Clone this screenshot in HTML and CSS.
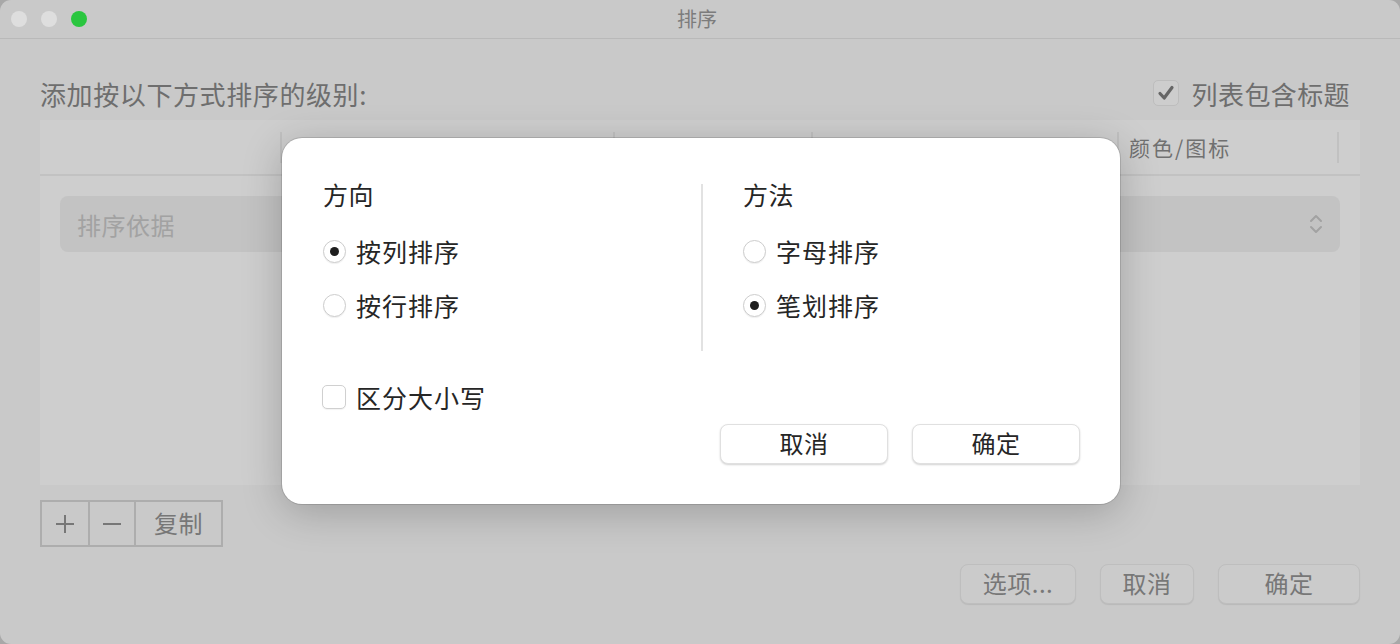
FILE: index.html
```html
<!DOCTYPE html>
<html lang="zh-CN">
<head>
    <meta charset="UTF-8">
    <meta name="viewport" content="width=device-width, initial-scale=1.0">
    <title>排序</title>
    <link rel="stylesheet" href="styles.css">
</head>
<body>

    <div class="window">
        <!-- title bar -->
        <div class="titlebar">
            <div class="lights">
                <span class="light"></span>
                <span class="light"></span>
                <span class="light green"></span>
            </div>
            <div class="title">排序</div>
        </div>

        <div class="content">
            <div class="top-row">
                <div class="heading">添加按以下方式排序的级别:</div>
                <label class="header-check">
                    <span class="check-box">
                        <svg width="20" height="20" viewBox="0 0 20 20"><path d="M4 10.5 L8.2 15 L16 4.5" fill="none" stroke="#666" stroke-width="3.2" stroke-linecap="round" stroke-linejoin="round"/></svg>
                    </span>
                    列表包含标题
                </label>
            </div>

            <div class="table">
                <div class="thead">
                    <div class="th" style="width: 242px"></div>
                    <div class="th" style="width: 333px"></div>
                    <div class="th" style="width: 198px"></div>
                    <div class="th" style="width: 306px"></div>
                    <div class="th th-label" style="width: 220px">颜色/图标</div>
                </div>
                <div class="tbody">
                    <div class="select">
                        <span>排序依据</span>
                        <svg width="16" height="24" viewBox="0 0 16 24"><path d="M3 9 L8 4 L13 9 M3 15 L8 20 L13 15" fill="none" stroke="#a2a2a2" stroke-width="2" stroke-linecap="round" stroke-linejoin="round"/></svg>
                    </div>
                </div>
            </div>

            <div class="segmented">
                <button class="seg seg-icon">
                    <svg width="20" height="20" viewBox="0 0 20 20"><path d="M10 1 V19 M1 10 H19" stroke="#777" stroke-width="2"/></svg>
                </button>
                <button class="seg seg-icon">
                    <svg width="20" height="20" viewBox="0 0 20 20"><path d="M1 10 H19" stroke="#777" stroke-width="2"/></svg>
                </button>
                <button class="seg seg-text">复制</button>
            </div>

            <div class="actions">
                <button class="btn btn-options">选项...</button>
                <button class="btn btn-cancel">取消</button>
                <button class="btn btn-ok">确定</button>
            </div>
        </div>

        <!-- options sheet -->
        <div class="dialog">
            <div class="cols">
                <div class="col">
                    <div class="col-title">方向</div>
                    <label class="opt"><span class="radio checked"></span>按列排序</label>
                    <label class="opt"><span class="radio"></span>按行排序</label>
                </div>
                <div class="col col-right">
                    <div class="col-title">方法</div>
                    <label class="opt"><span class="radio"></span>字母排序</label>
                    <label class="opt"><span class="radio checked"></span>笔划排序</label>
                </div>
            </div>
            <label class="opt case-row"><span class="box"></span>区分大小写</label>
            <div class="dialog-buttons">
                <button class="dbtn">取消</button>
                <button class="dbtn">确定</button>
            </div>
        </div>
    </div>

</body>
</html>
```

FILE: styles.css
```css
body {
    margin: 0;
    background-color: #a8a8a8;
    font-family: "Noto Sans CJK SC", "Noto Sans", sans-serif;
    overflow: hidden;
}

button {
    font-family: inherit;
    margin: 0;
    cursor: pointer;
}

.window {
    position: relative;
    height: 644px;
    background-color: #c9c9c9;
    border-radius: 11px;
    overflow: hidden;
}

.titlebar {
    position: relative;
    height: 38px;
    border-bottom: 1px solid #b9b9b9;
    display: flex;
    align-items: center;
    justify-content: center;
}

.lights {
    position: absolute;
    left: 11px;
    top: 11px;
    display: flex;
    gap: 14px;
}

.light {
    width: 16px;
    height: 16px;
    border-radius: 50%;
    background-color: #dedede;
}

.light.green {
    background-color: #2ac63f;
}

.title {
    font-size: 20px;
    color: #7c7c7c;
    line-height: 36px;
    margin-right: 6px;
}

.content {
    padding: 0 40px;
}

.top-row {
    display: flex;
    justify-content: space-between;
    align-items: center;
    height: 40px;
    margin-top: 34px;
    margin-bottom: 7px;
}

.heading {
    font-size: 26px;
    letter-spacing: 0.6px;
    color: #6e6e6e;
}

.header-check {
    display: flex;
    align-items: center;
    gap: 13px;
    font-size: 26px;
    letter-spacing: 0.4px;
    color: #6e6e6e;
    margin-right: 10px;
}

.check-box {
    width: 26px;
    height: 26px;
    box-sizing: border-box;
    border: 1px solid #bdbdbd;
    border-radius: 5px;
    background-color: #cdcdcd;
    display: flex;
    align-items: center;
    justify-content: center;
}

.table {
    height: 365px;
    background-color: #cecece;
}

.thead {
    height: 54px;
    border-bottom: 2px solid #c2c2c2;
    display: flex;
    align-items: center;
}

.th {
    height: 31px;
    border-right: 2px solid #c1c1c1;
    box-sizing: border-box;
}

.th-label {
    font-size: 21px;
    letter-spacing: 2px;
    color: #707070;
    line-height: 31px;
    padding-left: 10px;
}

.tbody {
    padding: 20px 20px;
}

.select {
    height: 56px;
    border-radius: 8px;
    background-color: #c3c3c3;
    display: flex;
    align-items: center;
    justify-content: space-between;
    padding: 0 16px 0 17px;
    font-size: 24px;
    letter-spacing: 0.5px;
    color: #a2a2a2;
}

.segmented {
    display: flex;
    margin-top: 15px;
    width: 183px;
    height: 47px;
    border: 2px solid #adadad;
    box-sizing: border-box;
}

.seg {
    border: none;
    background: transparent;
    display: flex;
    align-items: center;
    justify-content: center;
    padding: 0;
}

.seg + .seg {
    border-left: 2px solid #adadad;
}

.seg-icon {
    width: 46px;
}

.seg-text {
    flex: 1;
    font-size: 24px;
    letter-spacing: 0.5px;
    color: #777;
    padding-bottom: 2px;
}

.actions {
    display: flex;
    justify-content: flex-end;
    gap: 24px;
    margin-top: 17px;
}

.btn {
    height: 40px;
    border: 1px solid #bebebe;
    border-radius: 8px;
    background-color: #cbcbcb;
    box-shadow: 0 1px 1px rgba(0, 0, 0, 0.08);
    font-size: 24px;
    letter-spacing: 0.5px;
    color: #777;
    padding: 0 0 4px 0;
}

.btn-options { width: 116px; }
.btn-cancel { width: 94px; }
.btn-ok { width: 142px; }

/* sheet on top of the window */
.dialog {
    position: absolute;
    left: 282px;
    top: 138px;
    width: 838px;
    height: 366px;
    box-sizing: border-box;
    padding: 46px 40px 40px 40px;
    background-color: #ffffff;
    border-radius: 20px;
    box-shadow: 0 0 0 1px rgba(0, 0, 0, 0.12), 0 8px 40px rgba(0, 0, 0, 0.22);
    color: #262626;
}

.cols {
    display: flex;
}

.col {
    width: 379px;
    box-sizing: border-box;
    padding-bottom: 31px;
    padding-left: 1px;
}

.col-right {
    border-left: 2px solid #e2e2e2;
    padding-left: 40px;
}

.col-title {
    font-size: 25px;
    line-height: 24px;
    letter-spacing: 0.5px;
    margin-top: -2px;
    margin-bottom: 30px;
}

.opt {
    display: flex;
    align-items: center;
    gap: 10px;
    height: 30px;
    font-size: 25px;
    letter-spacing: 1px;
}

.opt + .opt {
    margin-top: 24px;
}

.radio {
    width: 23px;
    height: 23px;
    box-sizing: border-box;
    border-radius: 50%;
    border: 1px solid #cdcdcd;
    background-color: #fff;
    box-shadow: 0 1px 1px rgba(0, 0, 0, 0.06);
    display: flex;
    align-items: center;
    justify-content: center;
}

.radio.checked::after {
    content: "";
    width: 9px;
    height: 9px;
    border-radius: 50%;
    background-color: #1e1e1e;
}

.case-row {
    margin-top: 31px;
}

.box {
    width: 24px;
    height: 24px;
    box-sizing: border-box;
    border: 1px solid #d0d0d0;
    border-radius: 5px;
    background-color: #fff;
    box-shadow: 0 1px 1px rgba(0, 0, 0, 0.05);
}

.dialog-buttons {
    display: flex;
    justify-content: flex-end;
    gap: 24px;
    margin-top: 12px;
}

.dbtn {
    width: 168px;
    height: 40px;
    border: 1px solid #e0e0e0;
    border-radius: 8px;
    background-color: #fff;
    box-shadow: 0 1px 2px rgba(0, 0, 0, 0.18);
    font-size: 24px;
    letter-spacing: 0.5px;
    color: #262626;
    padding: 0 0 4px 0;
}
```
